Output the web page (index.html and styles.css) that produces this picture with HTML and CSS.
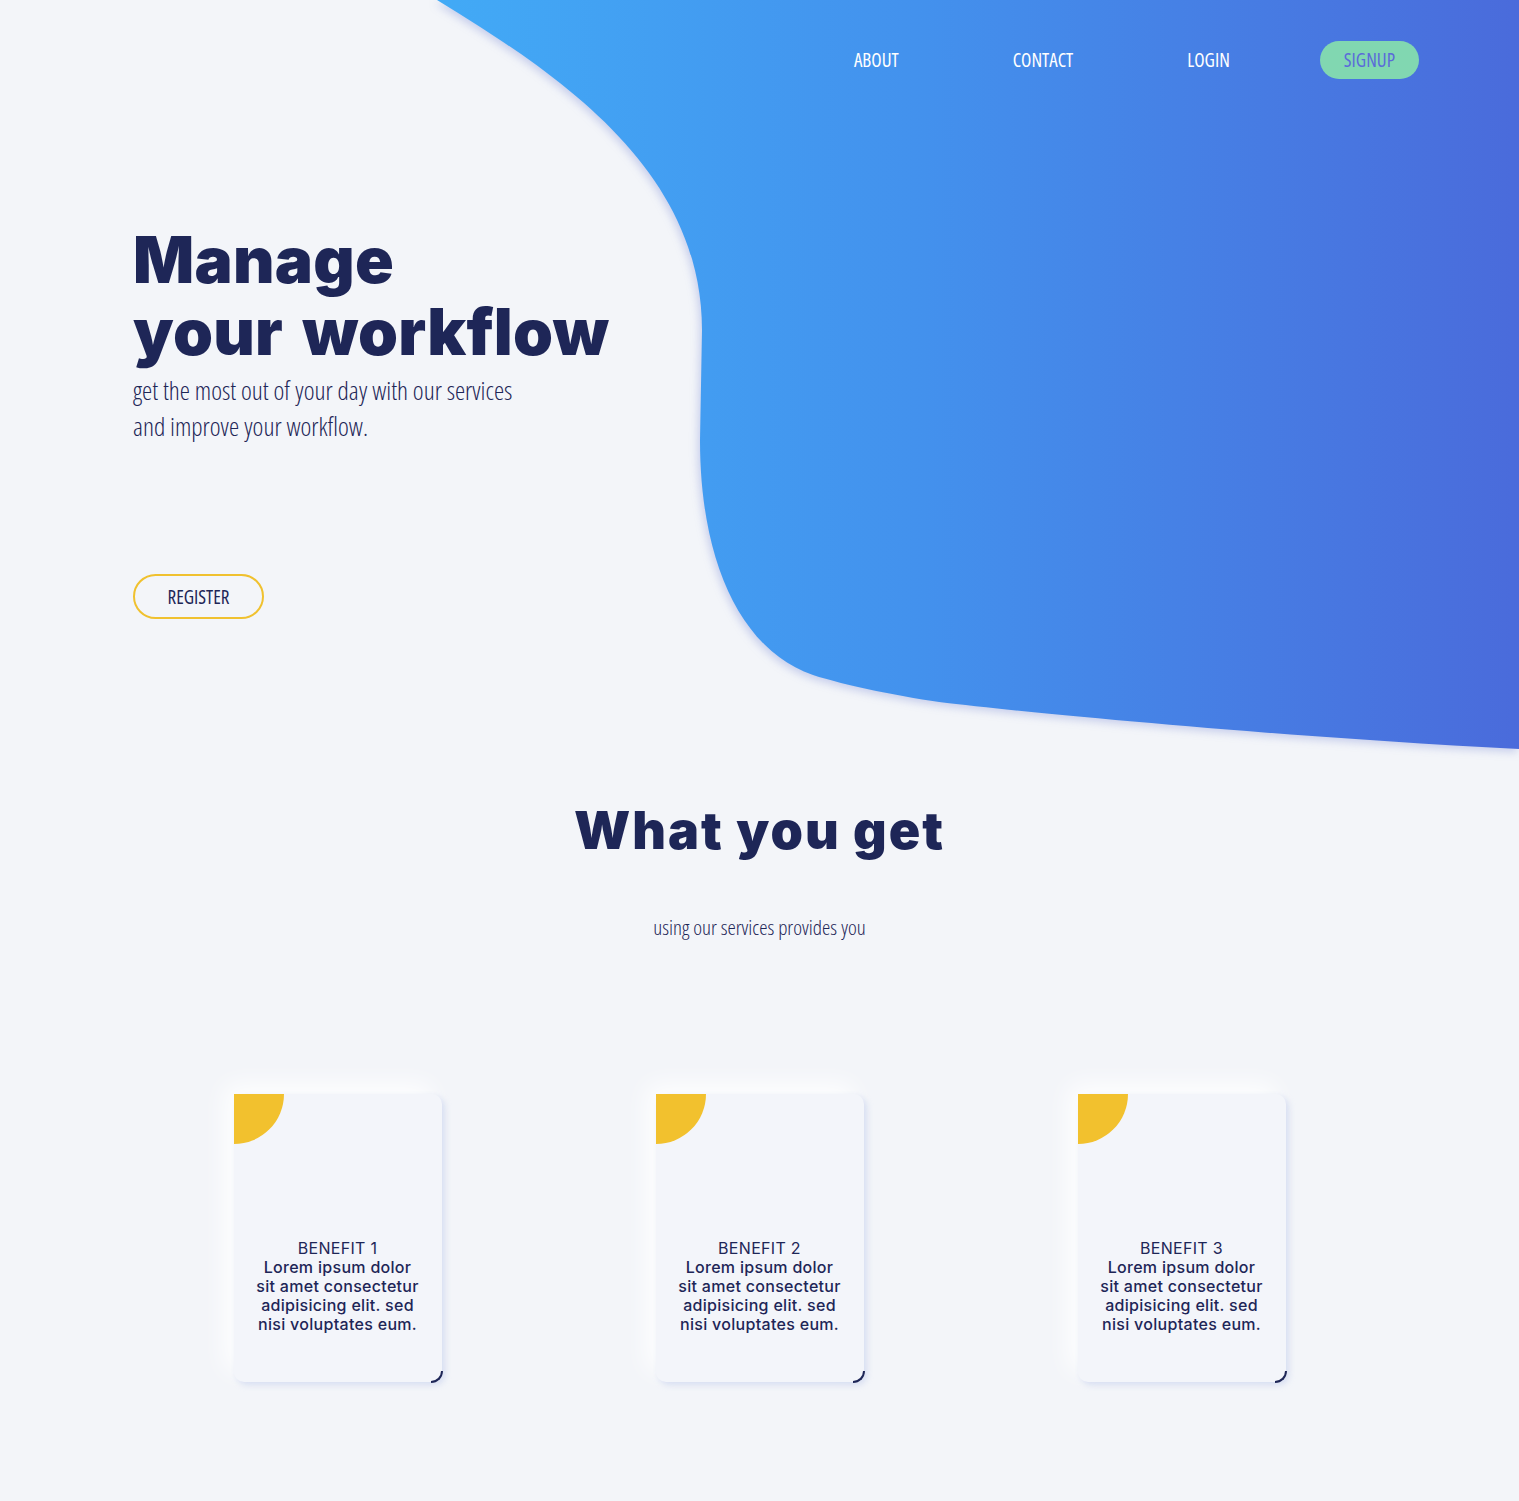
FILE: index.html
```html
<!DOCTYPE html>
<html lang="en">
<head>
<meta charset="utf-8">
<title>Manage your workflow</title>
<link rel="stylesheet" href="styles.css">
</head>
<body>
<div class="page">
  <svg class="blob" viewBox="0 0 1519 760" aria-hidden="true">
    <defs>
      <linearGradient id="blobGrad" gradientUnits="userSpaceOnUse" x1="437" y1="0" x2="1519" y2="0">
        <stop offset="0" stop-color="#42aaf6"/>
        <stop offset="0.45" stop-color="#4391ed"/>
        <stop offset="1" stop-color="#4a6bdb"/>
      </linearGradient>
    </defs>
    <path d="M437,0 C560,75 702,170 702,330 L700,440 C700,560 740,650 813,675 C843,685 907,698 947,703 C1060,716 1300,738 1519,749 L1519,0 Z" fill="url(#blobGrad)"/>
  </svg>

  <header class="nav">
    <a class="nav-link" href="#">About</a>
    <a class="nav-link" href="#">Contact</a>
    <a class="nav-link" href="#">Login</a>
    <a class="nav-link nav-signup" href="#">Signup</a>
  </header>

  <section class="hero">
    <h1 class="hero-title">Manage<br>your workflow</h1>
    <p class="hero-text">get the most out of your day with our services<br>and improve your workflow.</p>
    <a class="btn-register" href="#">Register</a>
  </section>

  <section class="benefits">
    <h2 class="benefits-title">What you get</h2>
    <p class="benefits-sub">using our services provides you</p>
    <div class="cards">
      <div class="card-cell">
        <div class="card">
          <span class="card-dot"></span>
          <p class="card-name">BENEFIT 1</p>
          <p class="card-text">Lorem ipsum dolor sit amet consectetur adipisicing elit. sed nisi voluptates eum.</p>
          <span class="card-arc"></span>
        </div>
      </div>
      <div class="card-cell">
        <div class="card">
          <span class="card-dot"></span>
          <p class="card-name">BENEFIT 2</p>
          <p class="card-text">Lorem ipsum dolor sit amet consectetur adipisicing elit. sed nisi voluptates eum.</p>
          <span class="card-arc"></span>
        </div>
      </div>
      <div class="card-cell">
        <div class="card">
          <span class="card-dot"></span>
          <p class="card-name">BENEFIT 3</p>
          <p class="card-text">Lorem ipsum dolor sit amet consectetur adipisicing elit. sed nisi voluptates eum.</p>
          <span class="card-arc"></span>
        </div>
      </div>
    </div>
  </section>
</div>
</body>
</html>
```

FILE: styles.css
```css
html {
  background: #f3f5f9;
}
body {
  margin: 0;
  background: #f3f5f9;
  color: #1e2657;
  font-family: "Open Sans", "Roboto", sans-serif;
  font-stretch: 75%;
}
.page {
  position: relative;
  overflow: hidden;
  padding-bottom: 100px;
}
.blob {
  position: absolute;
  top: 0;
  left: 0;
  width: 1519px;
  height: 760px;
  z-index: 0;
  filter: drop-shadow(-2px 3px 4px rgba(80, 100, 200, 0.28));
}
.nav {
  position: relative;
  z-index: 1;
  display: flex;
  justify-content: flex-end;
  gap: 66px;
  padding: 41px 100px 0 0;
}
.nav-link {
  height: 38px;
  padding: 1px 24px 0;
  display: flex;
  align-items: center;
  justify-content: center;
  color: #ffffff;
  text-decoration: none;
  text-transform: uppercase;
  font-size: 19px;
  font-weight: 500;
  line-height: 1;
  box-sizing: border-box;
}
.nav-signup {
  background: #81d7b1;
  color: #5b6bd9;
  border-radius: 19px;
}
.hero {
  position: relative;
  z-index: 1;
  padding: 0 0 0 133px;
  margin-top: 145px;
}
.hero-title {
  margin: 0;
  font-family: "Inter", "Lato", sans-serif;
  font-stretch: normal;
  font-weight: 900;
  font-size: 64px;
  line-height: 72px;
  letter-spacing: 0.3px;
  word-spacing: 6px;
  color: #1e2657;
}
.hero-text {
  margin: 4px 0 0;
  font-size: 25.8px;
  line-height: 36px;
  font-weight: 300;
  color: #1e2657;
}
.btn-register {
  display: inline-flex;
  align-items: center;
  justify-content: center;
  box-sizing: border-box;
  width: 131px;
  height: 45px;
  margin-top: 130px;
  border: 2px solid #f0c12f;
  border-radius: 23px;
  color: #1e2657;
  text-decoration: none;
  text-transform: uppercase;
  font-size: 19px;
  font-weight: 500;
}
.benefits {
  position: relative;
  z-index: 1;
  margin-top: 182px;
  text-align: center;
}
.benefits-title {
  margin: 0;
  font-family: "Inter", "Lato", sans-serif;
  font-stretch: normal;
  font-weight: 900;
  font-size: 52px;
  line-height: 60px;
  letter-spacing: 2px;
  color: #1e2657;
}
.benefits-sub {
  margin: 54px 0 0;
  font-size: 21px;
  line-height: 24px;
  font-weight: 300;
  color: #1e2657;
}
.cards {
  display: grid;
  grid-template-columns: repeat(3, 422px);
  justify-content: center;
  margin-top: 155px;
}
.card-cell {
  display: flex;
  justify-content: center;
}
.card {
  position: relative;
  box-sizing: border-box;
  width: 208px;
  height: 288px;
  padding: 0 21px 48px;
  display: flex;
  flex-direction: column;
  justify-content: flex-end;
  background: #f3f5fa;
  border-radius: 10px;
  box-shadow: 3px 3px 6px rgba(170, 185, 230, 0.4), -10px -10px 24px rgba(255, 255, 255, 0.9);
  font-family: "Inter", "Lato", sans-serif;
  font-stretch: normal;
  color: #1e2657;
}
.card-dot {
  position: absolute;
  top: 0;
  left: 0;
  width: 50px;
  height: 50px;
  background: #f2c12e;
  border-bottom-right-radius: 50px;
}
.card-name {
  margin: 0;
  font-size: 16px;
  line-height: 19px;
  font-weight: 400;
  letter-spacing: 0.3px;
}
.card-text {
  margin: 0;
  font-size: 16px;
  line-height: 19px;
  font-weight: 500;
  letter-spacing: 0.3px;
}
.card-arc {
  position: absolute;
  right: -1px;
  bottom: -1px;
  width: 10px;
  height: 10px;
  border-right: 2px solid #1e2657;
  border-bottom: 2px solid #1e2657;
  border-bottom-right-radius: 12px;
}
```
